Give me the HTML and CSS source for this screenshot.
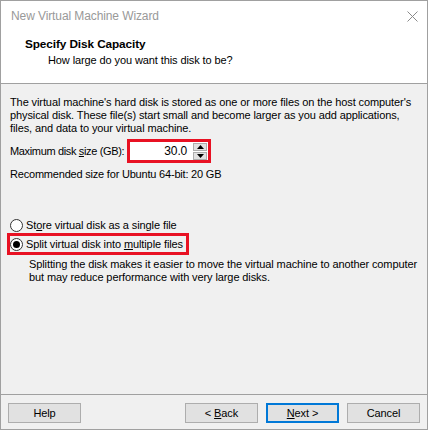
FILE: index.html
```html
<!DOCTYPE html>
<html>
<head>
<meta charset="utf-8">
<link rel="stylesheet" href="styles.css">
</head>
<body>
<div class="window">
  <div class="titlebar">
    <span class="title">New Virtual Machine Wizard</span>
    <svg class="close" width="11" height="11" viewBox="0 0 11 11"><path d="M0.5 0.5L10.5 10.5M10.5 0.5L0.5 10.5" stroke="#8a8a8a" stroke-width="1" fill="none"/></svg>
  </div>
  <div class="header">
    <div class="h-title">Specify Disk Capacity</div>
    <div class="h-sub">How large do you want this disk to be?</div>
  </div>
  <div class="body">
    <p class="para">The virtual machine's hard disk is stored as one or more files on the host computer's<br>physical disk. These file(s) start small and become larger as you add applications,<br>files, and data to your virtual machine.</p>
    <div class="size-row">
      <span class="size-label">Maximum disk <u>s</u>ize (GB):</span>
      <div class="hl-box">
        <div class="spin">
          <span class="spin-val">30.0</span>
          <div class="spin-btns">
            <div class="sbtn"><svg width="7" height="4" viewBox="0 0 7 4"><path d="M3.5 0L7 4H0Z" fill="#000"/></svg></div>
            <div class="sbtn"><svg width="7" height="4" viewBox="0 0 7 4"><path d="M0 0H7L3.5 4Z" fill="#000"/></svg></div>
          </div>
        </div>
      </div>
    </div>
    <p class="rec">Recommended size for Ubuntu 64-bit: 20 GB</p>
    <div class="radios">
      <div class="radio-row"><span class="radio"></span><span>St<u>o</u>re virtual disk as a single file</span></div>
      <div class="radio-row sel"><span class="radio"><span class="dot"></span></span><span>Split virtual disk into <u>m</u>ultiple files</span></div>
    </div>
    <p class="desc">Splitting the disk makes it easier to move the virtual machine to another computer<br>but may reduce performance with very large disks.</p>
  </div>
  <div class="footer">
    <button class="btn">Help</button>
    <div class="spacer"></div>
    <button class="btn">&lt; <u>B</u>ack</button>
    <button class="btn primary"><u>N</u>ext &gt;</button>
    <button class="btn">Cancel</button>
  </div>
</div>
</body>
</html>
```
FILE: styles.css
```css
* { box-sizing: border-box; }
html, body { margin: 0; padding: 0; }
body { width: 428px; height: 430px; overflow: hidden; font-family: "Liberation Sans", Arial, sans-serif; font-size: 11px; letter-spacing: -0.1px; color: #000; }
.window { width: 428px; height: 430px; border: 1px solid #a0a0a0; background: #f0f0f0; display: flex; flex-direction: column; white-space: nowrap; }
.titlebar { height: 30px; flex: none; background: #fff; display: flex; align-items: center; padding-left: 10px; padding-right: 9px; }
.title { color: #999; flex: 1; font-size: 12px; }
.close { display: block; }
.header { height: 53px; flex: none; background: #fff; border-bottom: 1px solid #a0a0a0; padding-left: 24px; padding-top: 6px; }
.h-title { font-weight: bold; line-height: 15px; font-size: 11.8px; }
.h-sub { padding-left: 23px; line-height: 15px; margin-top: 1px; }
.body { flex: 1; padding: 12px 9px 0 9px; }
.para { margin: 0; line-height: 13px; }
.size-row { display: flex; align-items: center; margin-top: 4px; gap: 3px; }
.size-label { letter-spacing: -0.35px; }
.hl-box { border: 3px solid #e81123; width: 84px; height: 24px; }
.spin { background: #fff; height: 100%; display: flex; align-items: center; padding-right: 1px; }
.spin-val { flex: 1; text-align: right; padding-right: 6px; font-size: 12px; }
.spin-btns { display: flex; flex-direction: column; gap: 1px; }
.sbtn { width: 14px; height: 8px; background: #e1e1e1; border: 1px solid #adadad; display: flex; align-items: center; justify-content: center; }
.sbtn svg { display: block; }
.rec { margin: 5px 0 0 0; line-height: 13px; letter-spacing: -0.2px; }
.radios { margin-top: 36px; display: flex; flex-direction: column; }
.radio-row { display: flex; align-items: center; gap: 3px; height: 16px; }
.radio-row.sel { border: 3px solid #e81123; height: 22px; width: 182px; margin-left: -3px; }
.radio { flex: none; width: 13px; height: 13px; border: 1px solid #333; border-radius: 50%; background: #fff; display: flex; align-items: center; justify-content: center; }
.dot { width: 7px; height: 7px; border-radius: 50%; background: #000; }
.desc { margin: 3px 0 0 19px; line-height: 13px; }
.footer { border-top: 1px solid #a0a0a0; height: 35px; flex: none; display: flex; align-items: flex-start; padding: 8px 7px 0 7px; gap: 8px; }
.spacer { flex: 1; }
.btn { width: 73px; height: 20px; background: #e1e1e1; border: 1px solid #adadad; font: inherit; letter-spacing: inherit; padding: 0; color: #000; }
.btn.primary { border: 2px solid #0078d7; }
```
